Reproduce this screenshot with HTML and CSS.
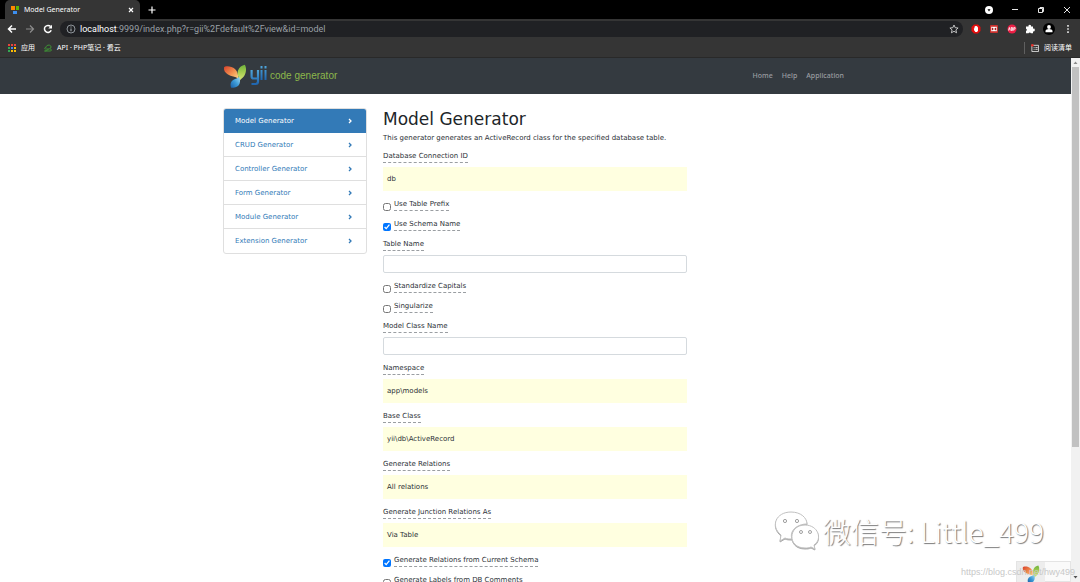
FILE: index.html
```html
<!DOCTYPE html>
<html lang="en">
<head>
<meta charset="utf-8">
<title>Model Generator</title>
<link rel="stylesheet" href="styles.css">
</head>
<body>
<svg class="defs" aria-hidden="true">
  <defs>
    <linearGradient id="leaf-red" x1="0" y1="0" x2="1" y2="1"><stop offset="0" stop-color="#d8402a"/><stop offset=".6" stop-color="#f39a55"/><stop offset="1" stop-color="#fbd98a"/></linearGradient>
    <linearGradient id="leaf-green" x1="0" y1="0" x2="0" y2="1"><stop offset="0" stop-color="#6fb33c"/><stop offset=".5" stop-color="#a9cf52"/><stop offset="1" stop-color="#d9e67a"/></linearGradient>
    <linearGradient id="leaf-blue" x1="1" y1="0" x2="0" y2="1"><stop offset="0" stop-color="#a5dcf2"/><stop offset=".5" stop-color="#3c9ad6"/><stop offset="1" stop-color="#1a5fa8"/></linearGradient>
    <linearGradient id="wordmark" x1="0" y1="0" x2="0" y2="1"><stop offset="0" stop-color="#4fa6dc"/><stop offset="1" stop-color="#1f66b0"/></linearGradient>
    <symbol id="leaves" viewBox="0 0 24 24">
      <path fill="url(#leaf-red)" d="M1 3.500C1.500 1.500 8.500 1.500 12 5c2.500 2.500 3.500 6 3.300 9.700C12.500 12.300 8 12.500 5 10.500 2 8.500.6 6.500 1 3.500Z"/>
      <path fill="url(#leaf-green)" d="M21.800.8c2 3.500 1.500 8-.8 11.500-1.400 2-3.200 2.700-4.300 4.500C15.700 13 13.800 10 15 6.500 16.200 3 19 1.500 21.800.8Z"/>
      <path fill="url(#leaf-blue)" d="M16.200 12.800c1.400 3.500 1.100 6.500-.7 8.700-1.500 1.700-4 2.300-7.300 2.300C7 20.500 7.500 17.500 10.500 15.700c2.200-1.200 4.300-1.200 5.700-2.900Z"/>
    </symbol>
  </defs>
</svg>

<header class="browser">
  <div class="tabstrip">
    <div class="tab">
      <svg class="tab-icon" viewBox="0 0 10 10"><path fill="#ff8a00" d="M1 1h4v4H1z"/><path fill="#5fb404" d="M6 1h3v4H6z"/><path fill="#3d8ff0" d="M3 6h4v3H3z"/></svg>
      <span class="tab-title">Model Generator</span>
      <button class="icon-btn" aria-label="Close tab"><svg viewBox="0 0 8 8"><path class="stroke" d="M2 2l4 4M6 2L2 6"/></svg></button>
    </div>
    <button class="icon-btn new-tab" aria-label="New tab"><svg viewBox="0 0 8 8"><path class="stroke" d="M4 .5v7M.5 4h7"/></svg></button>
    <div class="window-buttons">
      <button class="icon-btn" aria-label="Tab search"><svg viewBox="0 0 8 8"><circle cx="4" cy="4" r="4" fill="#fff"/><path d="M2.500 3.200h3L4 5.400z"/></svg></button>
      <button class="icon-btn" aria-label="Minimize"><svg viewBox="0 0 8 8"><path class="stroke thin" d="M1 3.500h6"/></svg></button>
      <button class="icon-btn" aria-label="Restore"><svg viewBox="0 0 8 8"><path class="stroke thin" d="M1.500 2.500h4v4h-4zM3 2.500v-1h3.500v4h-1"/></svg></button>
      <button class="icon-btn" aria-label="Close window"><svg viewBox="0 0 8 8"><path class="stroke thin" d="M1 1l6 6M7 1L1 7"/></svg></button>
    </div>
  </div>

  <div class="toolbar">
    <div class="nav-buttons">
      <button class="icon-btn" aria-label="Back"><svg viewBox="0 0 10 10"><path class="stroke wide" d="M9 5H1.500M5 1.500L1.500 5 5 8.500"/></svg></button>
      <button class="icon-btn dim" aria-label="Forward"><svg viewBox="0 0 10 10"><path class="stroke" d="M1 5h7.500M5 1.500L8.500 5 5 8.500"/></svg></button>
      <button class="icon-btn" aria-label="Reload"><svg viewBox="0 0 10 10"><path class="stroke wide" d="M8.200 6.200A3.500 3.500 0 1 1 7.600 2.600"/><path fill="#fff" d="M9 .8v3.700H5.300z"/></svg></button>
    </div>
    <div class="address">
      <svg class="info" viewBox="0 0 10 10"><circle class="stroke thin" cx="5" cy="5" r="4"/><path class="stroke" d="M5 4.500V7.300M5 2.500v1"/></svg>
      <span class="url"><span class="host">localhost</span>:9999/index.php?r=gii%2Fdefault%2Fview&amp;id=model</span>
      <button class="icon-btn star" aria-label="Bookmark this page"><svg viewBox="0 0 10 10"><path class="stroke thin" d="M5 1l1.200 2.700 2.900.3-2.200 1.900.7 2.900L5 7.300 2.400 8.800l.7-2.900L.9 4l2.900-.3z"/></svg></button>
    </div>
    <div class="extensions">
      <button class="icon-btn" aria-label="Blocker"><svg viewBox="0 0 10 10"><path fill="#e40d0d" d="M3 .5h4L9.500 3v4L7 9.500H3L.5 7V3z"/><path fill="#fff" d="M2.800 4.500l.7-.2V2.800l1-.8 1 0 1 .7.500 1v3L6 8H4.400L3.200 6.500z"/></svg></button>
      <button class="icon-btn" aria-label="Recorder"><svg viewBox="0 0 10 10"><rect x="1" y="1" width="8" height="8" rx="1" fill="#c9302c"/><path fill="#fff" d="M2 2.800h6v4.400H2z"/><path fill="#a01818" d="M2.700 3.200L4.900 5 2.700 6.800zM7.300 3.200L5.100 5l2.200 1.800z"/></svg></button>
      <button class="icon-btn" aria-label="ABP"><svg viewBox="0 0 10 10"><circle cx="5" cy="5" r="4.500" fill="#ed1e45"/><path stroke="#fff" stroke-width=".8" fill="none" d="M1.500 6.500l.9-3 .8 3M4.200 3.500v3h1.200v-3zM4.200 5h1.200M6.700 6.700V3.600h1.400v1.500H6.700"/></svg></button>
      <button class="icon-btn" aria-label="Extensions"><svg viewBox="0 0 10 10"><path fill="#fff" d="M1 2.500h2.500a1.300 1.300 0 1 1 2.500 0H8v2.300a1.300 1.300 0 1 1 0 2.400V9.300H5.900a1.200 1.200 0 0 0-2.300 0H1V7a1.200 1.200 0 0 0 0-2.300z"/></svg></button>
      <button class="icon-btn profile" aria-label="Profile"><svg viewBox="0 0 12 12"><circle cx="6" cy="6" r="6"/><circle cx="6" cy="4" r="1.900" fill="#fff"/><path fill="#fff" d="M2.500 9.300V8c0-1.200 2-1.900 3.500-1.900S9.500 6.800 9.500 8v1.300z"/></svg></button>
      <button class="icon-btn" aria-label="Menu"><svg viewBox="0 0 10 10"><path fill="#e8e8e8" d="M4.200 1h1.600v1.700H4.200zM4.200 4.200h1.600v1.600H4.200zM4.200 7.300h1.600V9H4.200z"/></svg></button>
    </div>
  </div>

  <div class="bookmarks">
    <a class="bookmark" href="#apps"><svg viewBox="0 0 8 8"><path fill="#e8453c" d="M0 0h2v2H0zM3 0h2v2H3zM6 0h2v2H6z"/><path fill="#34a853" d="M0 3h2v2H0z"/><path fill="#4285f4" d="M3 3h2v2H3z"/><path fill="#fbbc05" d="M6 3h2v2H6zM3 6h2v2H3zM6 6h2v2H6z"/><path fill="#34a853" d="M0 6h2v2H0z"/></svg>应用</a>
    <a class="bookmark" href="#api"><svg viewBox="0 0 8 8"><path fill="none" stroke="#3f9b35" stroke-width=".9" d="M2 3.500C2 .5 7 .2 7 3c0 1.600-1.500 2-3 2H1.500C0 5 .2 3.500 2 3.500M4.500 5c-1 1.500-2.500 2-4 2h5.700C8 7 7.700 5 6.200 5"/></svg>API · PHP笔记 · 看云</a>
    <a class="bookmark reading-list" href="#reading"><svg viewBox="0 0 9 9"><path fill="none" stroke="#e0e0e0" d="M1 1.500h7.500v7H1zM3 4h1M5 4h2.500M3 6h1M5 6h2.500"/><circle cx="1.500" cy="1.500" r="1.500" fill="#e3302a"/></svg>阅读清单</a>
  </div>
</header>

<div class="viewport">
  <div class="page">
    <nav class="navbar">
      <div class="container navbar-inner">
        <a class="brand" href="#home" aria-label="Yii code generator">
          <svg class="brand-leaves"><use href="#leaves"/></svg>
          <svg class="brand-word" viewBox="0 0 17 20"><path fill="none" stroke="url(#wordmark)" stroke-width="2.200" d="M1.600 4v6.500q0 2 2 2H7.500M8 4v11.500q0 2.500-2.500 2.500H1.500"/><path fill="url(#wordmark)" d="M10.500 4h2v10h-2zM10.500 0h2v2.400h-2zM14.500 4h2v10h-2zM14.500 0h2v2.400h-2z"/></svg>
          <span class="brand-text">code generator</span>
        </a>
        <div class="nav-links"><a href="#home">Home</a><a href="#help">Help</a><a href="#app">Application</a></div>
      </div>
    </nav>

    <div class="container columns">
      <aside class="generators">
        <a class="active" href="#model">Model Generator<svg viewBox="0 0 6 6"><path d="M2 1l2 2-2 2"/></svg></a>
        <a href="#crud">CRUD Generator<svg viewBox="0 0 6 6"><path d="M2 1l2 2-2 2"/></svg></a>
        <a href="#controller">Controller Generator<svg viewBox="0 0 6 6"><path d="M2 1l2 2-2 2"/></svg></a>
        <a href="#form">Form Generator<svg viewBox="0 0 6 6"><path d="M2 1l2 2-2 2"/></svg></a>
        <a href="#module">Module Generator<svg viewBox="0 0 6 6"><path d="M2 1l2 2-2 2"/></svg></a>
        <a href="#extension">Extension Generator<svg viewBox="0 0 6 6"><path d="M2 1l2 2-2 2"/></svg></a>
      </aside>

      <main class="content">
        <h1>Model Generator</h1>
        <p>This generator generates an ActiveRecord class for the specified database table.</p>
        <form class="form">
          <div class="group"><span class="label">Database Connection ID</span><div class="sticky">db</div></div>
          <div class="check"><input type="checkbox" id="prefix"><label class="label" for="prefix">Use Table Prefix</label></div>
          <div class="check"><input type="checkbox" id="schema" checked><label class="label" for="schema">Use Schema Name</label></div>
          <div class="group"><label class="label" for="table">Table Name</label><input class="text" type="text" id="table"></div>
          <div class="check"><input type="checkbox" id="capitals"><label class="label" for="capitals">Standardize Capitals</label></div>
          <div class="check"><input type="checkbox" id="singular"><label class="label" for="singular">Singularize</label></div>
          <div class="group"><label class="label" for="model">Model Class Name</label><input class="text" type="text" id="model"></div>
          <div class="group"><span class="label">Namespace</span><div class="sticky">app\models</div></div>
          <div class="group"><span class="label">Base Class</span><div class="sticky">yii\db\ActiveRecord</div></div>
          <div class="group"><span class="label">Generate Relations</span><div class="sticky">All relations</div></div>
          <div class="group"><span class="label">Generate Junction Relations As</span><div class="sticky">Via Table</div></div>
          <div class="check"><input type="checkbox" id="current" checked><label class="label" for="current">Generate Relations from Current Schema</label></div>
          <div class="check"><input type="checkbox" id="labels"><label class="label" for="labels">Generate Labels from DB Comments</label></div>
        </form>
      </main>
    </div>
    <div class="debug-bar"><div class="debug-logo"><svg><use href="#leaves"/></svg></div></div>
  </div>
  <div class="scrollbar">
    <svg viewBox="0 0 9 9"><path fill="#8a8a8a" d="M2.500 6h4l-2-2.500z"/></svg>
    <div class="thumb"></div>
    <svg viewBox="0 0 9 9"><path fill="#505050" d="M2.500 3h4l-2 2.500z"/></svg>
  </div>
</div>

<div class="watermark">
  <svg viewBox="0 0 46 40"><g class="wm-shape"><path d="M6 30l1-6C-4 15 2 1 17 1c10 0 16 6 16 12-10 0-18 7-15 15-3 0-5 0-7-1z"/><path d="M41 38l-1-4c9-6 4-20-9-20-17 0-18 23 0 23 2 0 4 0 6-1z"/></g><g class="wm-eyes"><circle cx="11" cy="10" r="1.600"/><circle cx="23" cy="10" r="1.600"/><circle cx="27" cy="21" r="1.500"/><circle cx="36" cy="21" r="1.500"/></g></svg>
  <span>微信号: Little_499</span>
</div>
<div class="source-mark">https://blog.csdn.net/hwy499</div>
</body>
</html>
```
FILE: styles.css
```css
* { box-sizing: border-box; }

body {
  margin: 0;
  height: 100vh;
  display: flex;
  flex-direction: column;
  overflow: hidden;
  position: relative;
  background: #fff;
  color: #2c3136;
  font: 7px/12px "DejaVu Sans", "Noto Sans CJK SC", sans-serif;
}

a { text-decoration: none; color: inherit; }
svg { display: block; }
.defs { position: absolute; width: 0; height: 0; }

.stroke { fill: none; stroke: currentColor; stroke-width: 1.2; }
.stroke.thin { stroke-width: 0.9; }
.stroke.wide { stroke-width: 1.5; }

/* Browser frame */
.browser {
  flex: none;
  color: #fff;
  background: #353535;
  font-family: "Noto Sans", "Noto Sans CJK SC", sans-serif;
}
.icon-btn { padding: 0; border: 0; background: none; color: inherit; }
.icon-btn svg { width: 10px; height: 10px; }
.icon-btn.dim { color: #8c8c8c; }

.tabstrip { display: flex; align-items: center; height: 19px; background: #000; }
.tab {
  display: flex;
  align-items: center;
  gap: 4px;
  width: 135px;
  height: 19px;
  margin-left: 5px;
  padding: 0 5px;
  border-radius: 5px 5px 0 0;
  background: #353535;
}
.tab-icon { width: 10px; height: 10px; }
.tab-title { flex: 1; font-size: 7px; }
.tab .icon-btn svg, .new-tab svg, .window-buttons svg { width: 8px; height: 8px; }
.new-tab { margin-left: 8px; }
.window-buttons { display: flex; gap: 18px; margin-left: auto; padding-right: 9px; }

.toolbar { display: flex; align-items: center; height: 20px; }
.nav-buttons { display: flex; gap: 8px; padding: 0 7px; }
.address {
  flex: 1;
  display: flex;
  align-items: center;
  gap: 4px;
  height: 16px;
  padding: 0 4px 0 6px;
  border-radius: 8px;
  background: #202124;
}
.info { width: 10px; height: 10px; color: #9aa0a6; }
.url { flex: 1; color: #9aa0a6; font-family: Roboto, sans-serif; font-size: 9px; }
.host { color: #fff; }
.star { color: #d0d0d0; }
.extensions { display: flex; align-items: center; gap: 8px; padding: 0 7px 0 8px; }
.profile svg { width: 12px; height: 12px; }

.bookmarks {
  display: flex;
  align-items: center;
  gap: 9px;
  height: 19px;
  padding: 0 8px;
  border-bottom: 1px solid #292929;
  font-size: 7px;
}
.bookmark { display: flex; align-items: center; gap: 5px; }
.bookmark svg { width: 8px; height: 8px; }
.reading-list { margin-left: auto; padding-left: 6px; border-left: 1px solid #606060; }

/* Page */
.viewport { flex: 1; display: flex; min-height: 0; }
.page { flex: 1; position: relative; overflow: hidden; }
.container { max-width: 641px; margin: 0 auto; padding: 0 8px; }

.navbar { background: #343a40; }
.navbar-inner { display: flex; align-items: center; justify-content: space-between; height: 36px; }
.brand { display: flex; align-items: center; gap: 3px; }
.brand-leaves { width: 24px; height: 24px; }
.brand-word { width: 17px; height: 20px; }
.brand-text { color: #8cb84b; font: 10px/12px "Liberation Sans", sans-serif; }
.nav-links {
  display: flex;
  gap: 9px;
  padding-right: 4px;
  color: #9a9da0;
  font-family: "Noto Sans", sans-serif;
  font-weight: 500;
}

.columns { display: flex; gap: 16px; padding-top: 14px; }
.generators {
  flex: 0 0 144px;
  align-self: flex-start;
  border: 1px solid #dfdfdf;
  border-radius: 3px;
  overflow: hidden;
}
.generators a {
  display: flex;
  align-items: center;
  justify-content: space-between;
  height: 24px;
  padding: 0 13px 0 11px;
  border-bottom: 1px solid #dfdfdf;
  color: #337ab7;
}
.generators a:last-child { border-bottom: 0; }
.generators svg { width: 6px; height: 6px; fill: none; stroke: currentColor; stroke-width: 1.3; }
.generators .active { color: #fff; background: #337ab7; border-color: #337ab7; }

.content { flex: 0 1 304px; }
h1 { margin: 0 0 2px; font-size: 17px; line-height: 22px; font-weight: 400; color: #212529; }
p { margin: 0 0 7px; white-space: nowrap; }
.group, .check { margin-bottom: 8px; }
.group { display: flex; flex-direction: column; align-items: flex-start; gap: 4px; }
.label { display: block; line-height: 11px; border-bottom: 1px dashed #9a9ea2; }
.sticky { width: 100%; padding: 6px 4px; background: #ffffe0; }
.text { width: 100%; height: 18px; border: 1px solid #d5dade; border-radius: 2px; background: #fff; }
.check { display: flex; align-items: flex-end; gap: 3px; }
.check input { width: 8px; height: 8px; margin: 0; }

.debug-bar {
  position: absolute;
  right: 0;
  bottom: 0;
  width: 55px;
  height: 21px;
  border: 1px solid #e4e4e4;
  background: #fafafa;
}
.debug-logo { width: 28px; height: 20px; padding: 3px 5px; background: #ededed; overflow: hidden; }
.debug-logo svg { width: 18px; height: 18px; }

.scrollbar { display: flex; flex-direction: column; width: 9px; background: #f1f1f1; }
.scrollbar svg { width: 9px; height: 9px; }
.thumb { height: 380px; margin: 0 1px auto; background: #c1c1c1; }

/* Overlaid marks */
.watermark {
  position: absolute;
  right: 36px;
  bottom: 31px;
  display: flex;
  align-items: center;
  gap: 3px;
  color: #fff;
  font: 300 28px/40px "Noto Sans CJK SC", sans-serif;
  text-shadow: 1px 1px 1px #777;
  white-space: nowrap;
}
.watermark svg { width: 46px; height: 40px; }
.wm-shape { fill: #fff; stroke: #c0c0c0; stroke-width: 1; filter: drop-shadow(0 1px 0 #aaa); }
.wm-eyes { fill: #fff; stroke: #a0a0a0; stroke-width: 1; }
.source-mark {
  position: absolute;
  right: 5px;
  bottom: 4px;
  color: #c8c8c8;
  font: 9px/12px "Liberation Sans", sans-serif;
}
```
